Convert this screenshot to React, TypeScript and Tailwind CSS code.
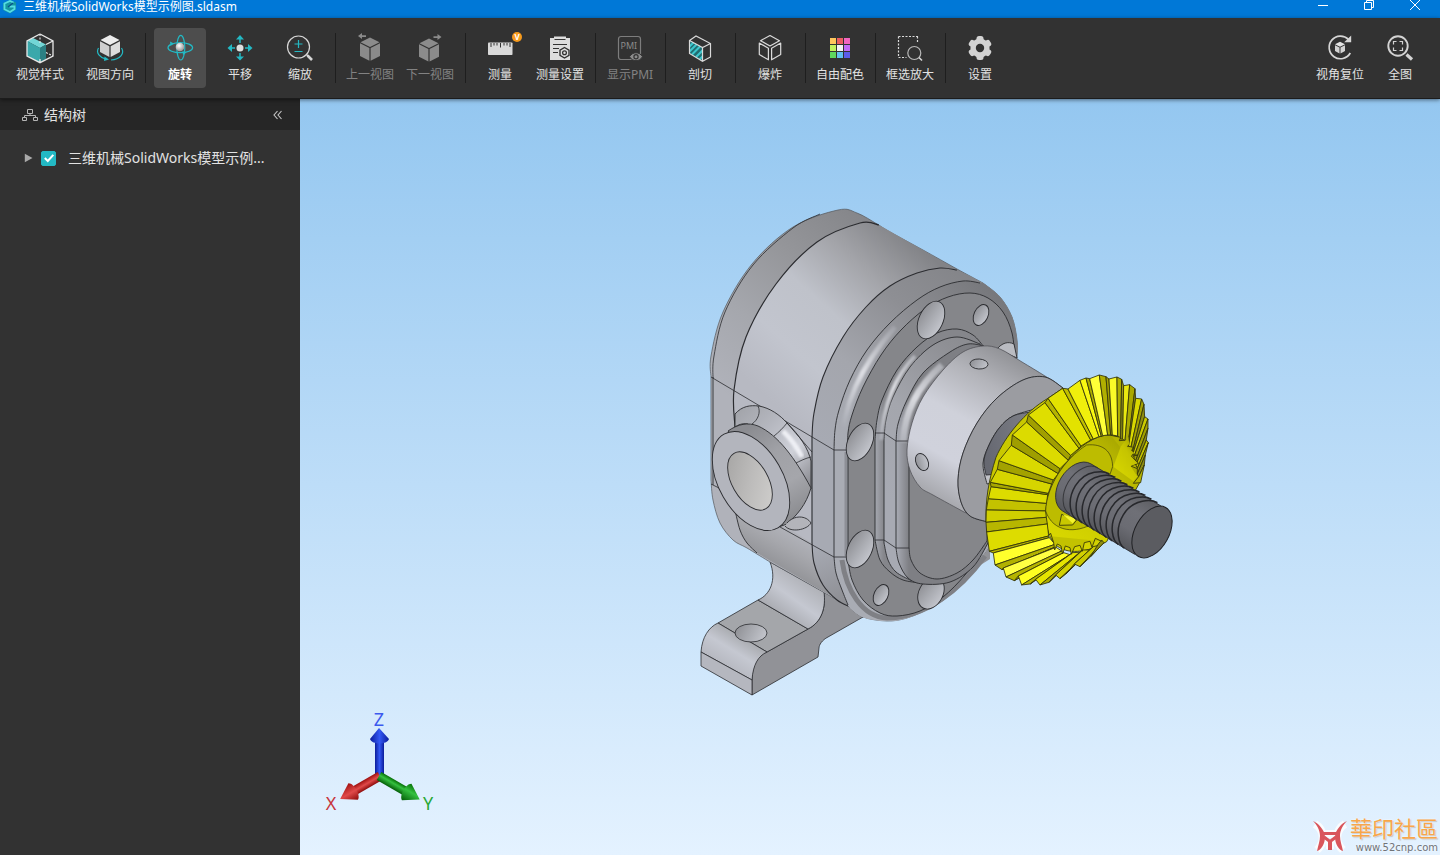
import { useState } from "react";
import type { ReactNode } from "react";
import clsx from "clsx";

type Pt = [number, number];

const TEAL = "#23b9c4";
const INK = "#2b2c30";

/* ---------- geometry helpers ---------- */

// Catmull-Rom spline through the points, as cubic segments
function segments(pts: Pt[]) {
    let d = "";
    for (let i = 0; i < pts.length - 1; i++) {
        const p0 = pts[i - 1] ?? pts[i];
        const p1 = pts[i];
        const p2 = pts[i + 1];
        const p3 = pts[i + 2] ?? p2;
        d += ` C${p1[0] + (p2[0] - p0[0]) / 6} ${p1[1] + (p2[1] - p0[1]) / 6} ${p2[0] - (p3[0] - p1[0]) / 6} ${p2[1] - (p3[1] - p1[1]) / 6} ${p2[0]} ${p2[1]}`;
    }
    return d;
}

const curve = (pts: Pt[]) => `M${pts[0][0]} ${pts[0][1]}${segments(pts)}`;

// closed region whose border is made of several splines joined by straight lines
const region = (...parts: Pt[][]) =>
    parts.map((p, i) => `${i === 0 ? "M" : "L"}${p[0][0]} ${p[0][1]}${segments(p)}`).join(" ") + " Z";

/* ---------- toolbar icons (32 x 32) ---------- */

function Icon({ children }: { children: ReactNode }) {
    return (
        <svg viewBox="0 0 32 32" className="h-8 w-8 shrink-0" fill="none" aria-hidden="true">
            {children}
        </svg>
    );
}

const StyleIcon = () => (
    <Icon>
        <path d="M3 9 9 6 22 12.500 16 16Z" fill="#72d6d6" />
        <path d="M3 9 16 16V30.500L3 24Z" fill="#3aa8ab" />
        <path d="M16 16 22 12.500V27L16 30.500Z" fill="#2b7f83" />
        <path d="M16 2 29 9V24L16 30.700 3 24V9L16 2M22 12.500 29 9M16 30.700V27" stroke="#e8e8e8" strokeWidth="1.300" />
        <path d="M16 2V12M22 20.500 29 24" stroke="#e8e8e8" strokeWidth="1.100" strokeDasharray="2 1.500" />
    </Icon>
);

const DirectionIcon = () => (
    <Icon>
        <path d="M16 3 25.500 8 16 13 6.500 8Z" fill="#ececec" />
        <path d="M6 9.200 15.400 14.200V25L6 20Z" fill="#cfcfcf" />
        <path d="M26 9.200 16.600 14.200V25L26 20Z" fill="#dcdcdc" />
        <path d="M4.500 16C1.500 21 6 25.500 12 27.200M17 28C26 27.500 31 21.500 27.500 16" stroke={TEAL} strokeWidth="1.200" />
        <path d="m10.500 24.500 4.500 3-5 1.500Z" fill={TEAL} />
    </Icon>
);

const RotateIcon = () => (
    <Icon>
        <defs>
            <radialGradient id="ball" cx=".4" cy=".35" r=".7">
                <stop offset="0" stopColor="#fff" />
                <stop offset="1" stopColor="#8b8b8b" />
            </radialGradient>
        </defs>
        <ellipse cx="16.300" cy="15.700" rx="12.300" ry="5" stroke={TEAL} strokeWidth="1.200" />
        <ellipse cx="16.800" cy="15.700" rx="4" ry="12.300" stroke={TEAL} strokeWidth="1.200" />
        <circle cx="16" cy="15" r="4.300" fill="url(#ball)" />
        <path d="m6 9.500 4 2-3.500 2.500ZM18.500 19l4 1.500-3.500 2.500Z" fill={TEAL} />
    </Icon>
);

const PanIcon = () => (
    <Icon>
        <circle cx="16" cy="16" r="3.500" fill="#dedede" />
        <path d="M16 7v4M16 21v4M7 16h4M21 16h4" stroke={TEAL} strokeWidth="1.500" />
        <path d="m16 3 4 4.500h-8ZM16 28.500l4-4h-8ZM3.500 16l4.500-4v8ZM28.500 16 24 12v8Z" fill={TEAL} />
    </Icon>
);

const ZoomIcon = () => (
    <Icon>
        <circle cx="14.500" cy="15" r="11" stroke="#d6d6d6" strokeWidth="1.200" />
        <path d="m22 22 2 2" stroke="#d6d6d6" strokeWidth="1.500" />
        <path d="m23.500 23.500 4.500 4.500" stroke="#d6d6d6" strokeWidth="2.600" />
        <path d="M14.500 8v8M10.500 12h8M10.500 19.500h8" stroke={TEAL} strokeWidth="1.200" />
    </Icon>
);

const PrevIcon = () => (
    <Icon>
        <g fill="#8b8b8b">
            <path d="M16 5.500 25.500 10.200 16 15 6.500 10.200Z" />
            <path d="M6 11.200 15.400 16V28.800L6 24ZM26 11.200 16.600 16V28.800L26 24Z" />
            <path d="m4 4 4-3v2.200h4v1.700H8V7Z" />
        </g>
    </Icon>
);

const NextIcon = () => (
    <Icon>
        <g fill="#8b8b8b">
            <path d="M15 6.500 24.500 11.200 15 16 5.500 11.200Z" />
            <path d="M5 12.200 14.400 17V29.500L5 24.800ZM25 12.200 15.600 17V29.500L25 24.800Z" />
            <path d="m27.500 5-4-3v2.200h-4v1.700h4V8Z" />
        </g>
    </Icon>
);

const RulerIcon = () => (
    <Icon>
        <rect x="4" y="10.500" width="24.500" height="12.500" rx=".8" fill="#d9d9d9" />
        <path d="M7 11v4M10 11v2.500M13 11v2.500M16.500 11v4.500M20 11v2.500M23 11v2.500M26 11v4" stroke="#323232" />
    </Icon>
);

const ClipboardIcon = () => (
    <Icon>
        <path d="M6 6h4V4.500h12V6h4v22H6Z" fill="#dcdcdc" />
        <path d="M10.500 7.500h11M9 12.500h14M9 16.500h6M9 20.500h5" stroke="#323232" strokeWidth="1.200" />
        <path d="m20.500 15.500 4.500 2.600v5.300L20.500 26 16 23.400v-5.300Z" fill="#dcdcdc" stroke="#323232" strokeWidth="1.400" />
        <circle cx="20.500" cy="20.800" r="1.900" stroke="#323232" strokeWidth="1.300" />
    </Icon>
);

const PmiIcon = () => (
    <Icon>
        <rect x="4.500" y="4.500" width="22" height="23" rx="2.500" stroke="#7d7d7d" strokeWidth="1.200" />
        <text x="6.500" y="16.500" fontSize="9" fill="#8a8a8a" fontFamily="Noto Sans">PMI</text>
        <path d="M15.500 24.700C18.500 19.500 25.500 19.500 28.500 24.700 25.500 30 18.500 30 15.500 24.700Z" fill="#8b8b8b" stroke="#323232" />
        <circle cx="22" cy="24.700" r="2.100" stroke="#323232" strokeWidth="1.200" />
    </Icon>
);

const SectionIcon = () => (
    <Icon>
        <path d="M5.500 8.500 18.500 15.500V29L5.500 21.500Z" fill="#226c71" />
        <path d="m5.500 14.500 4-4M5.500 19.500 12.500 12.500M8 22.500l8-8M12 25l6.500-6.500M15.500 27.500l3-3" stroke="#3cc7cd" strokeWidth="2" />
        <path d="M5.500 8.500 12 4l14.500 7.500V25l-8 4.300L5.500 21.500ZM5.500 8.500l13 7 8-4M18.500 15.500V29" stroke="#dadada" strokeWidth="1.200" />
    </Icon>
);

const ExplodeIcon = () => (
    <Icon>
        <g stroke="#dadada" strokeWidth="1.200" strokeLinejoin="round">
            <path d="M16 3.500 25.500 8.700 16 14 6.500 8.700Z" />
            <path d="M5.300 11 14.400 16.200V27.800L5.300 22.500ZM26.700 11 17.600 16.200V27.800L26.700 22.500Z" />
        </g>
    </Icon>
);

const SWATCHES = ["#ffc65c", "#ec5f62", "#f365c0", "#c1f25c", "#f2f2f2", "#c26bf7", "#5fd75f", "#62c0f0", "#5c5ce8"];

const PaletteIcon = () => (
    <Icon>
        {SWATCHES.map((c, i) => (
            <rect key={c} x={6 + (i % 3) * 7} y={6 + Math.floor(i / 3) * 7} width="6" height="6" fill={c} />
        ))}
    </Icon>
);

const BoxZoomIcon = () => (
    <Icon>
        <path d="M4.500 4.500h19.500M4.500 4.500v21M4.500 25.500h8M23.500 4.500v7" stroke="#dcdcdc" strokeWidth="1.200" strokeDasharray="2 1.500" />
        <circle cx="20.300" cy="21" r="6.500" stroke="#b9b9b9" strokeWidth="1.200" />
        <path d="m25 25.500 3 3" stroke="#d6d6d6" strokeWidth="1.600" />
    </Icon>
);

const GearIcon = () => (
    <Icon>
        {[0, 60, 120].map((a) => (
            <rect key={a} x="12.500" y="4" width="7" height="24" rx="2.500" fill="#d3d3d3" transform={`rotate(${a} 16 16)`} />
        ))}
        <circle cx="16" cy="16" r="9.600" fill="#d3d3d3" />
        <circle cx="16" cy="16" r="4.200" fill="#323232" />
    </Icon>
);

const ResetIcon = () => (
    <Icon>
        <path d="M24.500 7.500A11.300 11.300 0 1 0 26.300 21" stroke="#d6d6d6" strokeWidth="1.700" />
        <path d="M27.200 3.500v6.700h-7Z" fill="#d6d6d6" />
        <path d="m16 9.800 5 2.500-5 2.500-5-2.500Z" fill="#e3e3e3" />
        <path d="m11 13.300 4.500 2.300v5.800L11 19ZM21 13.300l-4.500 2.300v5.800L21 19Z" fill="#d3d3d3" />
    </Icon>
);

const FullIcon = () => (
    <Icon>
        <circle cx="14" cy="14" r="9.700" stroke="#d3d3d3" strokeWidth="1.900" />
        <path d="M9.500 12.500v-3h3M15.500 9.500h3v3M18.500 15.500v3h-3M12.500 18.500h-3v-3" stroke="#d3d3d3" strokeWidth="1.200" />
        <path d="m22.500 22.500 5.500 5" stroke="#d3d3d3" strokeWidth="3.200" />
    </Icon>
);

/* ---------- toolbar ---------- */

type Tool = { label: string; icon: ReactNode; active?: boolean; disabled?: boolean; badge?: string };

const GROUPS: Tool[][] = [
    [{ label: "视觉样式", icon: <StyleIcon /> }],
    [{ label: "视图方向", icon: <DirectionIcon /> }],
    [
        { label: "旋转", icon: <RotateIcon />, active: true },
        { label: "平移", icon: <PanIcon /> },
        { label: "缩放", icon: <ZoomIcon /> },
    ],
    [
        { label: "上一视图", icon: <PrevIcon />, disabled: true },
        { label: "下一视图", icon: <NextIcon />, disabled: true },
    ],
    [
        { label: "测量", icon: <RulerIcon />, badge: "V" },
        { label: "测量设置", icon: <ClipboardIcon /> },
    ],
    [{ label: "显示PMI", icon: <PmiIcon />, disabled: true }],
    [{ label: "剖切", icon: <SectionIcon /> }],
    [{ label: "爆炸", icon: <ExplodeIcon /> }],
    [{ label: "自由配色", icon: <PaletteIcon /> }],
    [{ label: "框选放大", icon: <BoxZoomIcon /> }],
    [{ label: "设置", icon: <GearIcon /> }],
];

const VIEW_TOOLS: Tool[] = [
    { label: "视角复位", icon: <ResetIcon /> },
    { label: "全图", icon: <FullIcon /> },
];

function ToolButton({ tool }: { tool: Tool }) {
    return (
        <button
            type="button"
            disabled={tool.disabled}
            className={clsx(
                "relative mx-1 flex h-15 w-13 flex-col items-center gap-[3px] rounded pt-1 text-xs whitespace-nowrap",
                tool.active && "bg-[#4d4d4d] font-bold text-white",
                tool.disabled && "text-[#828282]",
                !tool.active && !tool.disabled && "text-[#e2e2e2]",
            )}
        >
            {tool.icon}
            <span className="leading-4">{tool.label}</span>
            {tool.badge && (
                <span className="absolute top-1 right-1 flex h-2.5 w-2.5 items-center justify-center rounded-full bg-[#f79a1c] text-[8px] leading-none font-bold text-white">
                    {tool.badge}
                </span>
            )}
        </button>
    );
}

function Toolbar() {
    return (
        <nav className="z-10 flex h-[81px] shrink-0 items-center justify-between border-b border-[#1c1c1c] bg-[#323232] px-2.5 shadow-[0_1px_4px_rgba(0,0,0,0.5)]">
            <div className="flex items-center">
                {GROUPS.map((group, i) => (
                    <div key={group[0].label} className="flex items-center">
                        {i > 0 && <span className="mr-1 ml-[5px] h-12.5 w-px bg-[#1e1e1e]" />}
                        {group.map((tool) => (
                            <ToolButton key={tool.label} tool={tool} />
                        ))}
                    </div>
                ))}
            </div>
            <div className="flex items-center">
                {VIEW_TOOLS.map((tool) => (
                    <ToolButton key={tool.label} tool={tool} />
                ))}
            </div>
        </nav>
    );
}

function TitleBar() {
    return (
        <header className="flex h-[18px] shrink-0 items-start justify-between overflow-hidden bg-[#0078d7] text-white">
            <div className="flex items-start gap-1.5 pl-0.5">
                <svg viewBox="0 0 15 15" className="h-[15px] w-[15px]" fill="none" aria-hidden="true">
                    <path d="M1 3 8 0l6 2.500v7L8 13.500 1 10Z" fill="#15989f" />
                    <path d="M11.500 2.500 8 1 2.500 3.500v5.800L8 12l4.500-3V6.500H7.500" stroke="#55dce4" strokeWidth="1.800" />
                    <path d="m6 7 5-4" stroke="#0a4f8c" strokeWidth="1.200" />
                </svg>
                <h1 className="text-xs leading-[13px]">三维机械SolidWorks模型示例图.sldasm</h1>
            </div>
            <div className="flex pr-0.5">
                <button type="button" aria-label="最小化" className="flex h-3 w-[46px] justify-center">
                    <svg viewBox="0 0 12 12" className="h-3 w-3" stroke="#fff" fill="none"><path d="M1 5.500h10" /></svg>
                </button>
                <button type="button" aria-label="还原" className="flex h-3 w-[46px] justify-center">
                    <svg viewBox="0 0 12 12" className="h-3 w-3" stroke="#fff" fill="none"><path d="M1.500 2.500h7v7h-7ZM3.500 2.500v-2h7v7h-2" /></svg>
                </button>
                <button type="button" aria-label="关闭" className="flex h-3 w-[46px] justify-center">
                    <svg viewBox="0 0 12 12" className="h-3 w-3" stroke="#fff" fill="none"><path d="m1 0 10 10M11 0 1 10" /></svg>
                </button>
            </div>
        </header>
    );
}

function Sidebar() {
    const [visible, setVisible] = useState(true);
    return (
        <aside className="w-75 shrink-0 bg-[#323232] text-sm text-[#e2e2e2]">
            <div className="flex h-[31px] items-center bg-[#262626] pr-4 pl-[22px]">
                <svg viewBox="0 0 16 14" className="h-3.5 w-4" fill="none" stroke="#b5b5b5" aria-hidden="true">
                    <path d="M5.500 1.500h5v4h-5ZM.5 9.500h4v3h-4ZM11.500 9.500h4v3h-4ZM8 5.500v2M2.500 9.500v-2h11v2" />
                </svg>
                <h2 className="ml-1.5 leading-5">结构树</h2>
                <button type="button" aria-label="收起" className="ml-auto">
                    <svg viewBox="0 0 12 12" className="h-3 w-3" fill="none" stroke="#c8c8c8" strokeWidth="1.100">
                        <path d="M5.500 2 2 6l3.500 4M9.500 2 6 6l3.500 4" />
                    </svg>
                </button>
            </div>
            <div className="flex items-center pt-4.5 pr-4 pl-6">
                <button type="button" aria-label="展开">
                    <svg viewBox="0 0 9 10" className="h-2.5 w-[9px]" fill="#a9a9a9"><path d="M.8.8 8.500 5 .8 9.200Z" /></svg>
                </button>
                <label className="flex items-center">
                    <span className="ml-2 grid h-[15px] w-[15px] place-items-center">
                        <input
                            type="checkbox"
                            checked={visible}
                            onChange={(e) => setVisible(e.target.checked)}
                            className="peer col-start-1 row-start-1 h-[15px] w-[15px] appearance-none rounded-xs border border-[#23b9c4] checked:bg-[#23b9c4]"
                        />
                        <svg viewBox="0 0 12 12" className="pointer-events-none invisible col-start-1 row-start-1 h-3 w-3 peer-checked:visible" fill="none" stroke="#fff" strokeWidth="2">
                            <path d="m1.800 6 3 3L10.300 2.800" />
                        </svg>
                    </span>
                    <span className="ml-3 leading-5">三维机械SolidWorks模型示例...</span>
                </label>
            </div>
        </aside>
    );
}

/* ---------- pump model ---------- */

const SILHOUETTE: Pt[] = [[711, 377], [711, 356], [723, 312], [752, 264], [793, 227], [838, 210], [857, 213], [877, 224], [890, 232], [923, 250], [957, 269], [983, 283]];
const CAP_EDGE: Pt[] = [[713, 378], [714, 356], [725, 312], [753, 265], [793, 228], [820, 214]];
const NOSE: Pt[] = [[983, 283], [1000, 297], [1012, 317], [1017, 340], [1017, 358]];
const BELLY: Pt[] = [[990, 545], [970, 573], [950, 595], [930, 608], [907, 618], [887, 621], [863, 617], [848, 606]];
const HEEL: Pt[] = [[770, 562], [747, 548], [733, 540], [720, 523], [713, 500], [711, 480]];

const BACK_TOP: Pt[] = [[735, 427], [734, 390], [746, 337], [776, 284], [817, 242], [860, 223], [879, 225]];
const BACK_LOW: Pt[] = [[757, 553], [747, 543], [740, 530], [735, 510]];
const FLANGE_TOP: Pt[] = [[812, 437], [814, 413], [823, 377], [843, 337], [866, 307], [890, 286], [917, 273], [940, 268], [957, 270]];
const FLANGE_LOW: Pt[] = [[850, 607], [837, 600], [823, 585], [814, 563], [812, 543]];
const RIM_TOP: Pt[] = [[834, 450], [835, 430], [839, 410], [850, 380], [867, 350], [890, 323], [917, 300], [940, 287], [963, 281], [980, 283]];
const RIM_LOW: Pt[] = [[848, 605], [842, 590], [836, 573], [834, 557]];
const FACE_TOP: Pt[] = [[848, 450], [848, 433], [852, 415], [863, 387], [881, 355], [901, 330], [925, 309], [948, 297], [970, 293], [988, 298], [1003, 312], [1012, 333], [1015, 358]];
const FACE_LOW: Pt[] = [[985, 548], [965, 575], [943, 597], [920, 611], [897, 616], [880, 613], [863, 600], [852, 580], [848, 560]];

const PAD_A_TOP: Pt[] = [[875, 440], [877, 420], [882, 400], [897, 370], [917, 347], [937, 333], [957, 329], [973, 335], [984, 347]];
const PAD_A_LOW: Pt[] = [[920, 583], [903, 580], [890, 572], [880, 560], [875, 540]];
const PAD_B_TOP: Pt[] = [[884, 440], [886, 420], [893, 397], [910, 367], [933, 345], [957, 337], [980, 344]];
const PAD_B_LOW: Pt[] = [[910, 580], [896, 572], [888, 560], [884, 543]];
const PAD_C_TOP: Pt[] = [[896, 442], [898, 424], [907, 400], [923, 373], [950, 352], [968, 344], [984, 346]];
const PAD_C_LOW: Pt[] = [[988, 543], [973, 567], [950, 582], [923, 584], [908, 578], [899, 563], [896, 548]];
const PAD_D_LOW: Pt[] = [[987, 541], [973, 560], [957, 573], [937, 579], [920, 573], [911, 560], [909, 547]];

const BOSS: Pt[] = [[964, 512], [933, 495], [920, 487], [910, 470], [907, 450], [912, 423], [923, 397], [943, 370], [963, 352], [983, 346], [1000, 349], [1022, 362], [1045, 376], [1063, 388]];
const BOSS_FACE: Pt[] = [[1063, 388], [1045, 377], [1023, 380], [997, 398], [977, 423], [963, 453], [958, 480], [961, 502], [970, 516], [988, 522]];
const BORE: Pt[] = [[1035, 409], [1013, 416], [1000, 427], [990, 443], [983, 463], [987, 484]];

function Hole({ x, y, a, b, rot, fill = "url(#hole)" }: { x: number; y: number; a: number; b: number; rot: number; fill?: string }) {
    return <ellipse cx={x} cy={y} rx={a} ry={b} fill={fill} stroke={INK} strokeWidth=".9" transform={`rotate(${rot} ${x} ${y})`} />;
}

function Foot() {
    return (
        <g stroke={INK} strokeWidth=".8" strokeLinejoin="round">
            <path d="M752 695V679C752 665 758 655 767 652L808 629C822 622 826 607 824 592L800 560 880 600 863 617 828 637C822 640 819 645 819 648L818 657Z" fill="#919297" />
            <path d="M758 600 808 629 767 652 718 623Z" fill="#a4a6aa" />
            <path d="M770 562 824 592C826 607 822 622 808 629L758 600C770 595 777 580 770 562Z" fill="url(#riser)" />
            <path d="M718 623 767 652C758 656 753 665 752 680L701 652C702 637 709 627 718 623Z" fill="url(#toe)" />
            <path d="M701 652 752 680V695L701 666Z" fill="#b5b7bf" />
            <ellipse cx="751" cy="633" rx="16" ry="9" fill="url(#hole)" />
        </g>
    );
}

function Housing() {
    return (
        <g stroke={INK} strokeWidth=".9" fill="none">
            <path d="M968 573 990 559V530Z" fill="#919297" stroke="none" />
            <path d={region(SILHOUETTE, NOSE, BELLY, HEEL)} fill="url(#cap)" stroke="#55575c" strokeWidth=".7" />
            <path d="M713 377V485" />
            <path d={curve(CAP_EDGE)} strokeWidth=".8" />
            <path d={region(BACK_TOP, [[923, 250], [957, 270]], NOSE, BELLY, BACK_LOW)} fill="url(#barrel)" stroke="none" />
            <path d={region([[735, 495], [812, 543]], FLANGE_LOW.slice().reverse(), BACK_LOW)} fill="url(#under)" stroke="none" />
            <path d={curve(BACK_TOP)} strokeWidth="1.200" />
            <path d={curve(BACK_LOW)} />
            <path d={region(FLANGE_TOP, [[970, 276], [983, 283]], NOSE, BELLY, FLANGE_LOW)} fill="url(#flange)" stroke="none" />
            <path d={region([[812, 543], [834, 557]], RIM_LOW.slice().reverse(), FLANGE_LOW)} fill="url(#flangeLow)" stroke="none" />
            <path d={`${curve(FLANGE_TOP)}M812 437V543${curve(FLANGE_LOW)}`} strokeWidth="1.100" />
            <path d={region(RIM_TOP, NOSE, BELLY, RIM_LOW)} fill="url(#rim)" stroke="none" />
            <path d="M842 560C846 590 862 617 887 618 925 618 960 590 985 556" stroke="#7f8085" strokeWidth="5" />
            <path d={`${curve(RIM_TOP)}M834 450V557${curve(RIM_LOW)}`} />
            <path d="M841 452C842 405 861 366 895 327" stroke="url(#gleam)" strokeWidth="5" opacity=".75" filter="url(#soft)" />
            <path d="M846 452V556" stroke="#7b7c82" strokeWidth="3" opacity=".6" />
            <path d={region(FACE_TOP, FACE_LOW)} fill="#85868a" />
            <path d="M711 377 834 450H847M711 484 719 488M780 527 834 557H847" strokeWidth=".8" />
        </g>
    );
}

function SidePort() {
    return (
        <g stroke={INK} strokeWidth=".9" fill="none">
            <path d="M735 414C742 406 750 405 759 406 770 408 780 415 787 423 800 436 808 448 811 461V489L780 470 748 424C742 423 738 425 735 427Z" fill="url(#fillet)" />
            <path d="M758 406C761 412 758 420 752 424M787 423C783 428 779 432 774 436M811 457C806 458 800 461 794 464M787 423 812 452" strokeWidth=".8" />
            <path d="M783 431C791 439 797 447 802 457" stroke="#f4f5fa" strokeWidth="5" opacity=".85" filter="url(#soft)" />
            <path d="M728 431C738 424 748 422 758 426 778 435 795 458 811 488 806 505 797 515 787 524L770 530 735 440Z" fill="url(#portSide)" />
            <path d="M787 523C794 515 806 515 811 523 807 530 791 533 785 526" fill="#b3b4ba" />
            <Hole x={751} y={481} a={32} b={54} rot={-30} fill="#b3b5bd" />
            <Hole x={750} y={481} a={18} b={32} rot={-30} fill="url(#portBore)" />
        </g>
    );
}

function Pad() {
    return (
        <g stroke={INK} strokeWidth=".9" fill="none">
            <Hole x={931} y={593} a={12} b={17} rot={28} />
            <path d={region(PAD_A_TOP, [[990, 430], [988, 543]], [[960, 576], [920, 583]], PAD_A_LOW)} fill="url(#padOuter)" />
            <path d={region(PAD_B_TOP, [[990, 430], [988, 543]], [[950, 580], [910, 580]], PAD_B_LOW)} fill="url(#flange)" />
            <path d={region(PAD_C_TOP, [[1010, 430], [988, 543]], PAD_C_LOW)} fill="url(#padInner)" />
            <path d="M881 440C883 405 896 375 915 356" stroke="url(#gleam)" strokeWidth="4" opacity=".8" filter="url(#soft)" />
            <path d="M903 442C905 412 916 388 942 365" stroke="url(#gleam)" strokeWidth="7" opacity=".8" filter="url(#soft)" />
            <path d={region([[909, 440], [950, 460]], [[988, 480], [987, 541]], PAD_D_LOW)} fill="#85868a" />
            <path d="M875 433H884L896 441H908M875 540H884L896 548H909" strokeWidth=".8" />
            <Hole x={931} y={320} a={12} b={20} rot={25} />
            <Hole x={981} y={315} a={7} b={11} rot={25} />
            <Hole x={860} y={442} a={12} b={20} rot={25} />
            <Hole x={860} y={549} a={12} b={20} rot={25} />
            <Hole x={881} y={595} a={7} b={11} rot={25} />
            <path d="M997 349C1002 343 1008 341 1014 344L1017 358Z" fill="#babcc2" />
        </g>
    );
}

function Boss() {
    return (
        <g stroke={INK} strokeWidth=".9">
            <path d={region(BOSS, BOSS_FACE)} fill="url(#boss)" stroke="#4a4b50" strokeWidth=".7" />
            <path d={region(BOSS_FACE, [[1040, 480], [1070, 420]])} fill="#9b9ca1" />
            <path d={region(BORE, [[1050, 470], [1060, 410]])} fill="#c1c2c8" />
            <path d={region([[1030, 412], [1013, 416], [1000, 427], [990, 443], [984, 460], [986, 475]], [[1050, 470], [1060, 420]])} fill="url(#bore)" />
            <Hole x={979} y={364} a={9} b={5} rot={3} />
            <Hole x={922} y={462} a={6} b={9} rot={-25} />
        </g>
    );
}

// Tooth edges clockwise from the left: outer x, y, inner x, y, and the colour of the flank that follows
const TEETH: [number, number, number, number, string][] = [
    [319, 570, 497, 573, "#c3c200"],
    [325, 536, 500, 550, "#dddc00"],
    [333, 500, 503, 524, "#a8a700"],
    [331, 487, 505, 520, "#d6d500"],
    [352, 448, 515, 492, "#a3a200"],
    [357, 422, 520, 480, "#dad900"],
    [394, 376, 535, 461, "#9f9e00"],
    [397, 345, 540, 446, "#dcdb00"],
    [440, 306, 565, 421, "#a19f00"],
    [445, 285, 572, 406, "#dfde00"],
    [495, 248, 597, 385, "#b5b400"],
    [504, 235, 603, 378, "#e3e200"],
    [548, 205, 632, 360, "#c0bf00"],
    [564, 207, 640, 357, "#f0ef0c"],
    [600, 181, 657, 350, "#f9f812"],
    [618, 174, 664, 349, "#adac00"],
    [629, 176, 668, 347, "#ffff38"],
    [658, 165, 683, 345, "#b0af00"],
    [678, 170, 692, 345, "#a2a100"],
    [687, 177, 697, 345, "#fafa28"],
    [711, 171, 713, 348, "#aeae00"],
    [725, 178, 722, 357, "#97961a"],
    [731, 197, 728, 357, "#e9e810"],
    [749, 194, 735, 363, "#aaa900"],
    [765, 206, 744, 377, "#8d8c10"],
    [767, 235, 746, 377, "#dad900"],
    [785, 237, 752, 386, "#a5a400"],
    [792, 253, 756, 402, "#8d8c10"],
    [794, 290, 758, 404, "#cccb00"],
    [804, 297, 762, 410, "#a2a100"],
    [804, 325, 764, 430, "#908f10"],
    [799, 360, 768, 435, "#c4c300"],
    [805, 368, 772, 445, "#a09f00"],
    [796, 405, 772, 462, "#8f8e10"],
    [793, 435, 776, 470, "#b9b800"],
    [782, 488, 760, 490, "#a2a100"],
];

const LOWER_TEETH: [number, number, number, number, string][] = [
    [319, 570, 497, 573, "#d0cf00"],
    [318, 607, 499, 592, "#b7b600"],
    [320, 636, 502, 612, "#dddc00"],
    [328, 694, 506, 648, "#b6b500"],
    [340, 699, 508, 653, "#ffff2c"],
    [345, 735, 525, 673, "#b2b100"],
    [366, 749, 528, 680, "#8f8e10"],
    [370, 744, 528, 682, "#ffff44"],
    [378, 771, 545, 693, "#b5b400"],
    [403, 782, 549, 700, "#8f8e10"],
    [415, 768, 551, 698, "#ffff22"],
    [425, 795, 570, 704, "#b8b700"],
    [451, 792, 575, 702, "#8f8e10"],
    [467, 778, 578, 698, "#e5e400"],
    [480, 795, 600, 697, "#adac00"],
    [507, 787, 605, 693, "#8f8e10"],
    [527, 765, 608, 690, "#d2d100"],
    [540, 776, 630, 690, "#a9a800"],
    [558, 762, 636, 685, "#8f8e10"],
    [583, 732, 640, 680, "#c9c800"],
    [600, 740, 660, 675, "#a3a200"],
    [632, 710, 672, 668, "#8f8e10"],
    [655, 672, 665, 660, "#8f8e10"],
];

function Flanks({ edges }: { edges: typeof TEETH }) {
    return edges.slice(0, -1).map(([ox, oy, ix, iy, fill], i) => {
        const [nx, ny, mx, my] = edges[i + 1];
        return <polygon key={i} points={`${ox},${oy} ${nx},${ny} ${mx},${my} ${ix},${iy}`} fill={fill} />;
    });
}

function BevelGear() {
    return (
        <g transform="translate(880 320) scale(0.3333)" stroke="#33340a" strokeWidth="2.600" strokeLinejoin="round">
            <path d="M318 607C316 540 326 480 348 412 375 350 435 275 504 235L548 205 640 350 500 570Z" fill="#c9c800" />
            <path d="M497 573C500 480 600 345 690 345 750 350 790 410 778 490L680 665C620 700 560 705 525 673 505 650 495 610 497 573Z" fill="url(#dish)" />
            <Flanks edges={TEETH} />
            <Flanks edges={LOWER_TEETH} />
            <path d="M505 648 512 640 521 668 524 690 532 672 543 678 548 702 556 678 570 683 574 703 584 680 600 676 607 694 613 668 630 664 636 682 646 655 665 664" fill="#c3c200" />
            <path d="M692 346 722 352 718 362 744 360 740 378 760 382 750 402 774 406 752 408 776 430 752 438 772 446" fill="#b5b400" />
            <path d="M745 350 722 380 700 440 760 484 772 470 752 438 772 430 752 408 762 398 740 380 748 372Z" fill="url(#dish)" stroke="none" />
            <path d="M497 573C500 500 550 420 620 375 670 370 697 395 698 440L640 610C590 640 520 640 497 573Z" fill="#bdbc00" strokeWidth="2" />
            <path d="M545 583 590 600 578 615 538 616Z" fill="#c9c800" />
            <path d="M548 583 590 596 578 610Z" fill="#f5f430" stroke="none" />
        </g>
    );
}

function Screw() {
    const threads = Array.from({ length: 9 }, (_, i) => i);
    return (
        <g>
            <g transform="translate(1077 487) rotate(31)">
                <path d="M0-27H80C86-27 92-22 96-12L84 28H0A18 27 0 0 1 0-27Z" fill="url(#shaft)" stroke={INK} strokeWidth=".8" />
                <path d="M8-27A18 27 0 0 0 8 27" fill="none" stroke="#37383c" />
                {threads.map((i) => (
                    <path key={i} d="M5-28C-1-28-18-20-18 0-18 18-6 28 0 28" fill="none" stroke="#27282c" strokeWidth="1.500" transform={`translate(${16 + i * 7} 0)`} />
                ))}
            </g>
            <ellipse cx="1152" cy="532" rx="17" ry="28" transform="rotate(29 1152 532)" fill="#5b5c61" stroke="#1f2023" />
        </g>
    );
}

function Gradient({ id, from, to, stops, local }: { id: string; from: Pt; to: Pt; stops: string[]; local?: boolean }) {
    return (
        <linearGradient id={id} gradientUnits={local ? "objectBoundingBox" : "userSpaceOnUse"} x1={from[0]} y1={from[1]} x2={to[0]} y2={to[1]}>
            {stops.map((c, i) => (
                <stop key={i} offset={i / (stops.length - 1)} stopColor={c} />
            ))}
        </linearGradient>
    );
}

function PumpModel() {
    return (
        <svg viewBox="300 99 1140 756" className="h-full w-full" role="img" aria-label="三维模型">
            <defs>
                <Gradient id="cap" from={[860, 215]} to={[720, 390]} stops={["#85868a", "#95969a", "#a5a7ad", "#b0b2ba"]} />
                <Gradient id="barrel" from={[912, 240]} to={[770, 400]} stops={["#828387", "#a3a4a9", "#bfc2ca", "#c2c5ce", "#b7b9c2"]} />
                <Gradient id="under" from={[790, 520]} to={[765, 565]} stops={["#b7b9c1", "#a6a7ac", "#8f9094"]} />
                <Gradient id="flange" from={[980, 270]} to={[830, 450]} stops={["#828387", "#8e8f94", "#a4a6ad", "#a7aab3"]} />
                <Gradient id="flangeLow" from={[820, 545]} to={[845, 605]} stops={["#a7aab3", "#8c8d92"]} />
                <Gradient id="rim" from={[1000, 300]} to={[835, 450]} stops={["#77787c", "#8c8d92", "#a3a5ac", "#a9acb4"]} />
                <Gradient id="riser" from={[790, 570]} to={[765, 605]} stops={["#b1b3b9", "#c5c8d1", "#a9abb1"]} />
                <Gradient id="toe" from={[745, 635]} to={[725, 668]} stops={["#a4a6aa", "#c5c8d1", "#b5b7bf"]} />
                <Gradient id="hole" from={[0, 0.3]} to={[1, 0.6]} stops={["#8f9095", "#a9abb1", "#c3c5cc"]} local />
                <Gradient id="fillet" from={[740, 410]} to={[811, 480]} stops={["#a3a5ab", "#b6b8c0", "#cfd1d9", "#8f9096"]} />
                <Gradient id="portSide" from={[755, 425]} to={[805, 510]} stops={["#8b8c91", "#a0a1a6", "#a5a6ab", "#8c8d91"]} />
                <Gradient id="portBore" from={[0.2, 0]} to={[0.8, 1]} stops={["#a6a5a4", "#bcbbba", "#cfcecc"]} local />
                <Gradient id="padOuter" from={[875, 0]} to={[884, 0]} stops={["#a5a8b0", "#85868b"]} />
                <Gradient id="padInner" from={[896, 0]} to={[909, 0]} stops={["#a9acb5", "#7e7f84"]} />
                <Gradient id="gleam" from={[930, 340]} to={[880, 445]} stops={["#a0a2a9", "#f0f1f6", "#a8abb3"]} />
                <Gradient id="boss" from={[1018, 350]} to={[935, 500]} stops={["#8b8c90", "#b3b4ba", "#cfd1da", "#d0d2dc", "#a4a5aa"]} />
                <Gradient id="bore" from={[985, 450]} to={[1030, 440]} stops={["#666871", "#7a7c84"]} />
                <Gradient id="dish" from={[0.2, 1]} to={[0.9, 0.1]} stops={["#d9d800", "#cfce00", "#c5c400", "#a5a400"]} local />
                <Gradient id="shaft" from={[0, -28]} to={[0, 28]} stops={["#5d5e63", "#6f7077", "#6b6c73", "#55565b"]} />
                <filter id="soft"><feGaussianBlur stdDeviation="1.200" /></filter>
            </defs>
            <Foot />
            <Housing />
            <SidePort />
            <Pad />
            <Boss />
            <BevelGear />
            <Screw />
        </svg>
    );
}

function AxisTriad() {
    return (
        <svg viewBox="0 -8 116 116" className="absolute bottom-9 left-5 h-29 w-29" role="img" aria-label="坐标轴">
            <defs>
                <linearGradient id="axZ"><stop offset="0" stopColor="#0b1c9a" /><stop offset=".5" stopColor="#3358f5" /><stop offset="1" stopColor="#0b1c9a" /></linearGradient>
                <linearGradient id="axX" x2="0" y2="1"><stop offset="0" stopColor="#8f0c0c" /><stop offset=".5" stopColor="#e04a4a" /><stop offset="1" stopColor="#a01010" /></linearGradient>
                <linearGradient id="axY" x2="0" y2="1"><stop offset="0" stopColor="#067006" /><stop offset=".4" stopColor="#35c040" /><stop offset="1" stopColor="#045f08" /></linearGradient>
            </defs>
            <rect x="55" y="28" width="9" height="38" fill="url(#axZ)" />
            <path d="M59 17 69 28C67 34 52 34 50 28Z" fill="url(#axZ)" />
            <g transform="translate(60 65) rotate(150)">
                <path d="M0-4.500H31V4.500H0Z" fill="url(#axX)" />
                <path d="M46 0 31-9.500C26-7 26 7 31 9.500Z" fill="url(#axX)" />
            </g>
            <g transform="translate(59 65) rotate(30)">
                <path d="M0-4.500H32V4.500H0Z" fill="url(#axY)" />
                <path d="M47 0 32-9.500C27-7 27 7 32 9.500Z" fill="url(#axY)" />
            </g>
            <g fontFamily="Noto Sans" fontSize="18" textAnchor="middle">
                <text x="59" y="15" fill="#3c59ee">Z</text>
                <text x="11" y="99" fill="#c7363c">X</text>
                <text x="108" y="99" fill="#27a834">Y</text>
            </g>
        </svg>
    );
}

function Watermark() {
    return (
        <div className="absolute right-0.5 bottom-0 flex items-end gap-0.5">
            <svg viewBox="0 0 36 36" className="h-9 w-9" fill="none" aria-hidden="true">
                <g stroke="#fff" strokeWidth="8" strokeLinejoin="round" opacity=".8">
                    <path d="M3 5C13 11 13 24 5 31M33 5C23 11 23 24 31 31M9 15H27M18 20V30" />
                </g>
                <path d="M1 2C6 4 13 11 13 18 13 25 9 31 5 32 6 27 8 22 8 17 8 11 5 6 1 2ZM35 2C30 4 23 11 23 18 23 25 27 31 31 32 30 27 28 22 28 17 28 11 31 6 35 2Z" fill="#d9565c" />
                <path d="M10 14.500H26M12 18 18 22.500 24 18" stroke="#d9565c" strokeWidth="3" />
                <path d="M18 22V31" stroke="#d9565c" strokeWidth="4" />
            </svg>
            <div className="flex flex-col items-end">
                <span className="font-['Noto_Sans_CJK_TC',sans-serif] text-[22px] leading-7 text-[#f7a64a] [text-shadow:0_0_2px_#fff,1px_1px_1px_#bbb]">華印社區</span>
                <span className="font-['DejaVu_Sans',sans-serif] text-[10px] leading-[14px] text-[#6f7378] [text-shadow:0_0_2px_#fff]">www.52cnp.com</span>
            </div>
        </div>
    );
}

export default function App() {
    return (
        <div className="flex h-screen flex-col overflow-hidden font-['Noto_Sans','Noto_Sans_CJK_SC',sans-serif]">
            <TitleBar />
            <Toolbar />
            <div className="flex min-h-0 flex-1">
                <Sidebar />
                <main className="relative min-w-0 flex-1 bg-linear-to-b from-[#94c7f0] to-[#e4f2ff]">
                    <PumpModel />
                    <AxisTriad />
                    <Watermark />
                </main>
            </div>
        </div>
    );
}
